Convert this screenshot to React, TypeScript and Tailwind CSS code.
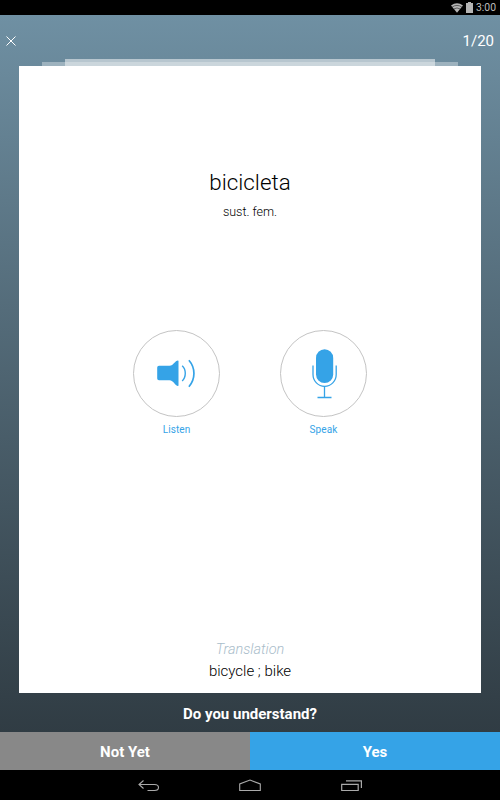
import React from 'react';

function StatusBar() {
  return (
    <div className="flex h-[15px] shrink-0 items-center justify-end bg-black pr-[4px] text-[#bdbdbd]">
      <svg width="12" height="10" viewBox="0 0 12 10" className="mr-[3px]">
        <path d="M0 2.5Q6-1.8 12 2.5L6 9.7Z" fill="#b4b4b4" />
        <path d="M1.2 4Q6 .8 10.8 4M2.7 6Q6 3.9 9.3 6" fill="none" stroke="#000" strokeWidth=".5" />
      </svg>
      <svg width="7" height="11" viewBox="0 0 7 11" className="mr-[3px]">
        <path d="M2 0H5V1H7V11H0V1H2Z" fill="#b4b4b4" />
      </svg>
      <span className="pt-[2px] text-[10.4px] leading-none">3:00</span>
    </div>
  );
}

function Header() {
  return (
    <header className="flex h-[43px] shrink-0 items-center justify-between pl-[6px] pr-[6px] pt-[8px] text-white">
      <svg width="10" height="10" viewBox="0 0 10 10" fill="none" stroke="#fff" strokeWidth="1">
        <path d="M.5.5L9.5 9.5M9.5.5L.5 9.5" />
      </svg>
      <span className="pt-[2px] text-[15px] leading-none">1/20</span>
    </header>
  );
}

function SpeakerIcon() {
  return (
    <svg width="85" height="85" viewBox="0 0 85 85" fill="none">
      <path
        d="M25.5 34.7H36C40 34.7 41.5 29.5 44.5 29.5Q45 29.5 45 30.2V54.3Q45 55 44.5 55C41.5 55 40 49.3 36 49.3H25.5Q23.7 49.3 23.7 47.5V36.5Q23.7 34.7 25.5 34.7Z"
        transform="translate(-0.5 0)"
        fill="#35a3e7"
      />
      <path d="M48.2 34.7C52.3 38.5 52.3 46.2 48.2 50" stroke="#35a3e7" strokeWidth="1.4" />
      <path d="M54.9 29.3C61.6 37 61.6 48 54.9 55.7" stroke="#35a3e7" strokeWidth="1.7" />
    </svg>
  );
}

function MicrophoneIcon() {
  return (
    <svg width="85" height="85" viewBox="0 0 85 85" fill="none">
      <rect x="35" y="18.3" width="17.2" height="33.7" rx="8.6" fill="#35a3e7" />
      <path d="M32 34.5V43.5A11.6 11.8 0 0 0 55.2 43.5V34.5" stroke="#35a3e7" strokeWidth="1.3" />
      <path d="M43.5 55.3V66.5M36.5 66.5H50.5" stroke="#35a3e7" strokeWidth="1.3" />
    </svg>
  );
}

function RoundAction({ label, children }: { label: string; children: React.ReactNode }) {
  return (
    <button className="flex w-[87px] flex-col items-center">
      <span className="flex size-[87px] items-center justify-center rounded-full border border-[#c4c4c4]">
        {children}
      </span>
      <span className="mt-[7px] text-[10px] leading-[12px] tracking-[0.1px] text-[#35a3e7]">{label}</span>
    </button>
  );
}

function NavBar() {
  return (
    <nav className="flex h-[30px] shrink-0 justify-center gap-[79px] bg-black">
      <svg width="22" height="30" viewBox="0 0 22 30" fill="none" stroke="#aaa" strokeWidth="1.1">
        <path d="M5.5 10.5L1 14.5L5.5 18.5M1 14.5H16.5Q20.5 14.5 20.5 17.5T16.5 20.5H9.5" />
      </svg>
      <svg width="22" height="30" viewBox="0 0 22 30" fill="none" stroke="#aaa" strokeWidth="1.1">
        <path d="M.7 20.5V14L11 10L21.3 14V20.5Z" />
      </svg>
      <svg width="22" height="30" viewBox="0 0 22 30" fill="none" stroke="#aaa" strokeWidth="1.2">
        <path d="M1.7 14.4H18.2V20.5H1.7ZM6 10.9H21.4V18" />
      </svg>
    </nav>
  );
}

export default function App() {
  return (
    <div className="flex h-[800px] w-[500px] flex-col overflow-hidden font-['Roboto',sans-serif]">
      <StatusBar />
      <main className="flex min-h-0 flex-1 flex-col bg-linear-to-b from-[#6f90a3] to-[#2d383f]">
        <Header />
        <div className="flex h-[8px] shrink-0 items-end justify-center pt-px">
          <div className="h-[4px] w-[23px] bg-[#9db2be]" />
          <div className="h-[7px] w-[370px] bg-linear-to-b from-[#b7c6cf] from-50% to-[#cbd6dc] to-50%" />
          <div className="h-[4px] w-[23px] bg-[#9db2be]" />
        </div>
        <section className="mx-[19px] flex h-[627px] shrink-0 flex-col items-center bg-white text-black">
          <h1 className="mt-[102px] text-[22.4px] leading-[28px] font-light">bicicleta</h1>
          <p className="mt-[8px] text-[12.5px] leading-[16px] font-light">sust. fem.</p>
          <div className="mt-[110px] flex gap-[60px]">
            <RoundAction label="Listen">
              <SpeakerIcon />
            </RoundAction>
            <RoundAction label="Speak">
              <MicrophoneIcon />
            </RoundAction>
          </div>
          <p className="mt-auto text-[14.5px] leading-[20px] font-light text-[#a9bdca] italic">Translation</p>
          <p className="mt-[1px] mb-[12px] text-[15px] leading-[20px] font-light">bicycle ; bike</p>
        </section>
        <p className="flex flex-1 items-center justify-center pt-[4px] text-[15px] font-bold text-white">
          Do you understand?
        </p>
        <div className="flex h-[38px] shrink-0 text-[15px] font-bold text-white">
          <button className="w-[250px] bg-[#888] pt-[2px]">Not Yet</button>
          <button className="w-[250px] bg-[#35a3e7] pt-[2px]">Yes</button>
        </div>
      </main>
      <NavBar />
    </div>
  );
}
